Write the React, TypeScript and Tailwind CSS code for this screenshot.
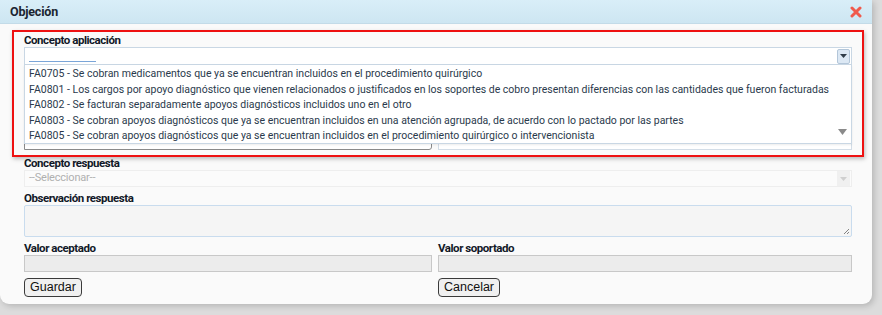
import React from 'react';

const opciones = [
  'FA0705 - Se cobran medicamentos que ya se encuentran incluidos en el procedimiento quirúrgico',
  'FA0801 - Los cargos por apoyo diagnóstico que vienen relacionados o justificados en los soportes de cobro presentan diferencias con las cantidades que fueron facturadas',
  'FA0802 - Se facturan separadamente apoyos diagnósticos incluidos uno en el otro',
  'FA0803 - Se cobran apoyos diagnósticos que ya se encuentran incluidos en una atención agrupada, de acuerdo con lo pactado por las partes',
  'FA0805 - Se cobran apoyos diagnósticos que ya se encuentran incluidos en el procedimiento quirúrgico o intervencionista',
];

function Label({ children, className = '' }: { children?: React.ReactNode; className?: string }) {
  return (
    <div className={`h-[14px] text-[11.5px] leading-[14px] font-bold text-[#111827] tracking-[-0.45px] ${className}`}>
      {children}
    </div>
  );
}

function Caret({ color }: { color: string }) {
  return (
    <svg width="7" height="4" viewBox="0 0 7 4">
      <path d="M0 0 L7 0 L3.5 4 Z" fill={color} />
    </svg>
  );
}

const btn =
  'h-[19px] px-[5px] bg-[#f0f0f0] border border-[#3a3a3a] rounded-[4px] text-[12.5px] leading-[17px] text-[#111]';

export default function App() {
  return (
    <div
      className="w-[882px] h-[315px] bg-[#dcdcdc] overflow-hidden"
      style={{ fontFamily: 'Roboto, "Liberation Sans", sans-serif' }}
    >
      <div className="relative w-[872px] h-[304px] bg-[#fafafa] rounded-br-[9px] rounded-bl-[9px] shadow-[2px_2px_6px_rgba(0,0,0,0.18)]">
        {/* Encabezado */}
        <div className="h-[24px] flex items-center justify-between pl-[10px] pr-[10px] bg-gradient-to-b from-[#d9eef8] to-[#cde6f2] border-b border-[#c3dbe8]">
          <span className="text-[12.5px] font-bold text-[#1b2530] tracking-[-0.2px] pt-[1px]">Objeción</span>
          <svg width="12" height="12" viewBox="0 0 12 12">
            <path d="M2 2 L10 10 M10 2 L2 10" stroke="#f05a4c" strokeWidth="3" strokeLinecap="round" />
          </svg>
        </div>

        {/* Formulario */}
        <div className="pl-[24px] pr-[20px] pt-[9px]">
          <Label>Concepto aplicación</Label>
          <div className="relative h-[18px] bg-white border border-[#c9d7e4] flex items-center justify-end pr-[1px]">
            <div className="absolute left-[4px] bottom-[2px] w-[67px] h-[1px] bg-[#7aa5d8]" />
            <div className="w-[13px] h-[15px] bg-[#dce8f4] border border-[#b3c6d9] rounded-[2px] flex items-center justify-center">
              <Caret color="#2f3b48" />
            </div>
          </div>

          {/* Filas tapadas por la lista */}
          <div className="grid grid-cols-[408px_1fr] gap-x-[6px] mt-[4px]">
            <Label />
            <Label />
            <div className="h-[18px] bg-[#ececec] border border-[#c8c8c8]" />
            <div className="h-[18px] bg-white border border-[#d3dde7]" />
          </div>
          <div className="grid grid-cols-[408px_1fr] gap-x-[6px] mt-[17px]">
            <Label />
            <Label />
            <div className="h-[18px] bg-white border border-[#8a8a8a] rounded-br-[3px]" />
            <div className="h-[18px] bg-white border border-[#d3dde7]" />
          </div>

          <Label className="mt-[6px]">Concepto respuesta</Label>
          <div className="h-[17px] bg-[#fbfbfb] border border-[#eeeeee] flex items-center justify-between pl-[4px] pr-[1px]">
            <span className="text-[11px] text-[#b0b0b0] tracking-[-0.2px]">--Seleccionar--</span>
            <div className="w-[13px] h-[15px] bg-[#f0f0f0] flex items-center justify-center">
              <Caret color="#cfcfcf" />
            </div>
          </div>

          <Label className="mt-[4px]">Observación respuesta</Label>
          <div className="relative h-[32px] bg-[#f5f5f5] border border-[#c9dcee] rounded-[2px]">
            <svg className="absolute right-[1px] bottom-[1px]" width="7" height="7" viewBox="0 0 7 7">
              <path d="M6 1 L1 6 M6 4 L4 6" stroke="#777" strokeWidth="0.9" />
            </svg>
          </div>

          <div className="grid grid-cols-[408px_1fr] gap-x-[6px] mt-[4px]">
            <Label>Valor aceptado</Label>
            <Label>Valor soportado</Label>
            <div className="h-[17px] bg-[#ececec] border border-[#c8c8c8]" />
            <div className="h-[17px] bg-[#ececec] border border-[#c8c8c8]" />
            <div className="flex mt-[6px]">
              <button className={btn} style={{ fontFamily: '"Liberation Sans", Arial, sans-serif' }}>
                Guardar
              </button>
            </div>
            <div className="flex mt-[6px]">
              <button className={btn} style={{ fontFamily: '"Liberation Sans", Arial, sans-serif' }}>
                Cancelar
              </button>
            </div>
          </div>
        </div>

        {/* Lista desplegada */}
        <div className="absolute left-[24px] top-[65px] w-[828px] h-[79px] bg-white border border-[#c9d7e4] border-t-0 shadow-[0_1px_2px_rgba(0,0,0,0.08)] pt-[1px]">
          {opciones.map((op) => (
            <div
              key={op}
              className="h-[15.5px] leading-[15.5px] pl-[4px] text-[10.5px] text-[#2a3a4c] whitespace-nowrap overflow-hidden"
            >
              {op}
            </div>
          ))}
          <div className="absolute right-[4px] bottom-[8px]">
            <svg width="9" height="6" viewBox="0 0 9 6">
              <path d="M0 0 L9 0 L4.5 6 Z" fill="#8a8a8a" />
            </svg>
          </div>
        </div>

        {/* Resaltado */}
        <div className="absolute left-[12px] top-[30px] w-[852px] h-[127px] border-2 border-[#ee1111] shadow-[1px_2px_4px_rgba(0,0,0,0.25)] pointer-events-none" />
      </div>
    </div>
  );
}
